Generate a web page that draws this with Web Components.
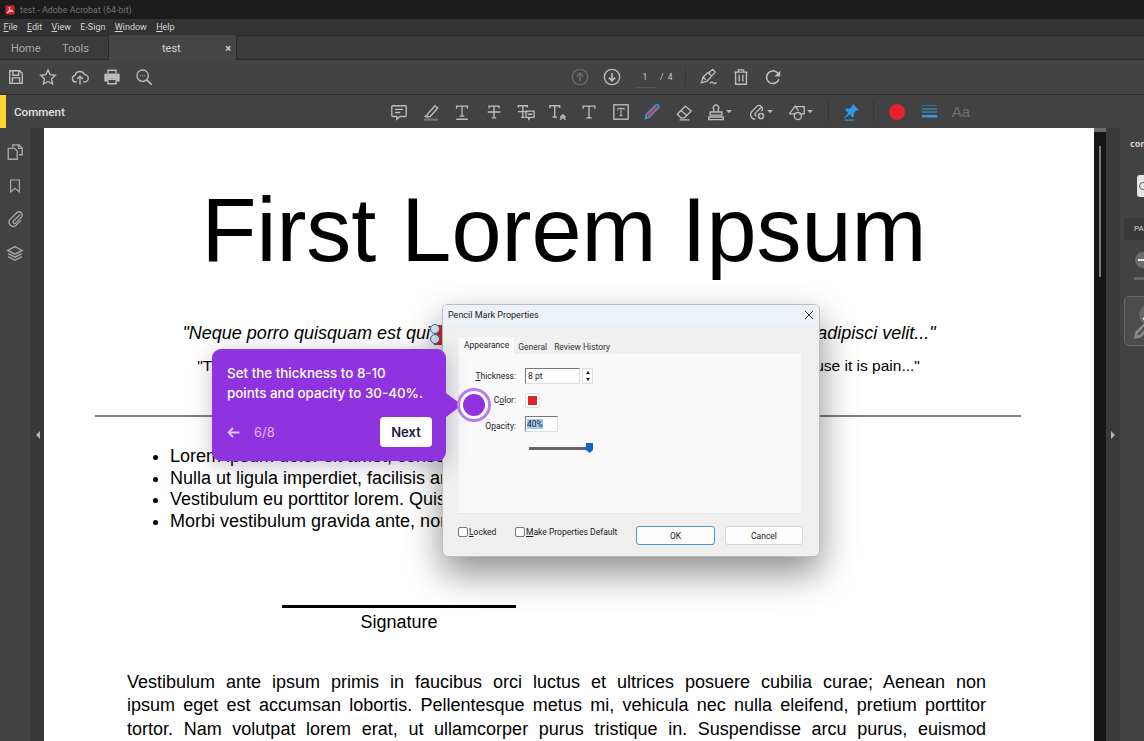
<!DOCTYPE html>
<html>
<head>
<meta charset="utf-8">
<title>test - Adobe Acrobat (64-bit)</title>
<style>
    html, body { margin: 0; height: 100%; background: #3a3a3a; overflow: hidden; }
    body { font-family: Roboto, "Noto Sans", sans-serif; }
    acro-app { display: block; }
</style>
</head>
<body>
<acro-app></acro-app>

<script>
const ICONS = {
    save: `<path d="M3 3h11l3 3v11H3z M6.500 3v5h6.500V3 M6 17v-6h8v6"/>`,
    star: `<path d="M10 2l2.400 5.400 5.800.7-4.300 3.900 1.200 5.800L10 14.900 4.900 17.800l1.200-5.800L1.800 8.100l5.800-.7z"/>`,
    upload: `<path d="M6.500 15.500H5a3.700 3.700 0 0 1-.5-7.300A5.500 5.500 0 0 1 15 7.400a4 4 0 0 1 .2 8.100h-1.700 M10 18.500v-9 M6.800 12.300L10 9.200l3.200 3.100"/>`,
    print: `<path fill="currentColor" stroke="none" d="M1.500 7.500q0-1.500 1.500-1.500h14q1.500 0 1.500 1.500V15H15v-3H5v3H1.500z"/><path d="M5.500 5.500V2.500h9v3 M5.500 12.500h9v5h-9z"/>`,
    zoom: `<circle cx="8.500" cy="8.500" r="6.300"/><path stroke-width="1.800" d="M13 13l5.500 5.500"/><path stroke-width="1.600" d="M5.800 8.500h.7 M8.200 8.500h.7 M10.600 8.500h.7"/>`,
    up: `<circle cx="10" cy="10" r="8.500"/><path stroke-width="1.800" d="M10 14.500V6 M6.500 9.300L10 5.800l3.500 3.500"/>`,
    down: `<circle cx="10" cy="10" r="8.500"/><path stroke-width="1.800" d="M10 5.500V14 M6.500 10.700l3.500 3.500 3.500-3.500"/>`,
    sign: `<path d="M1.500 16.500l2-6.500 5.500-5 4 4-5 5.500z M9.500 5.500L14 1.500l3 3-4 4.500 M3.500 10l3 3"/><path d="M11 17c1.500-1.500 2.500-1.500 3.500-.5s2 .8 4-.3"/>`,
    trash: `<path d="M2.500 4.500h15 M7 4.500V2h6v2.500 M4 4.500V18h12V4.500 M8 7.500V15 M12 7.500V15"/>`,
    rotate: `<path stroke-width="1.800" d="M16.500 12.500A7 7 0 1 1 14.500 5l2.500 2.500"/><path fill="currentColor" stroke="none" d="M18 3v6.500h-6.500z"/>`,
    comment: `<path d="M3 3h14q1 0 1 1v10q0 1-1 1h-6l-3.500 3v-3H3q-1 0-1-1V4q0-1 1-1z M5.500 7h9 M5.500 10.500h6"/>`,
    highlight: `<path d="M6 12.500L14.500 3l3 2.500L9 15l-3.500.5z"/><path stroke-width="2.400" stroke="#777" d="M2 18.500h16"/><path d="M3 15.500l2-2"/>`,
    tunder: `<path d="M4 6.500V3.500h12v3 M10 3.500v11 M7.500 14.500h5 M3.500 18h13"/>`,
    tstrike: `<path d="M4.500 6V3.500h11V6 M10 3.500v13 M7.500 16.500h5 M3 10h14"/>`,
    treplace: `<path d="M1.500 5V3h10v2 M6.500 3v13 M4.500 16h4 M1 9.500h11 M10 9h9v7h-4l-2 2v-2h-3z M12 12.500h5"/>`,
    tcaret: `<path d="M2 5.500V3h11v2.500 M7.500 3v12.500 M5 15.500h5 M13.500 16l3-3 3 3 M13.500 18.500l3-3 3 3"/>`,
    text: `<path d="M3.500 6.500V3.500h13v3 M10 3.500v13 M7 16.500h6"/>`,
    tbox: `<rect x="2" y="2" width="16" height="16" stroke-width="1.500"/><path stroke-width="1.100" d="M6.500 8V6h7v2 M10 6v8 M8.500 14h3"/>`,
    pencil: `<path stroke="#2f9be8" stroke-width="1.800" d="M2.800 17.300l1-4.600L14.500 2.200q1.300-.9 2.500.3t.3 2.500L6.800 15.800z"/><path stroke="#e8344a" stroke-width="2.800" d="M5.500 14.300L15.500 4.500"/>`,
    eraser: `<path d="M2.500 12.500L11.500 3.500l6.500 5.500-7.500 7.500H6.500z M6.800 8.500l6.500 5.500 M5 18.800h11"/>`,
    stamp: `<path d="M7.500 10V7a3 3 0 1 1 5 0v3 M3.500 10h13v3.500h-13z M2 15.500h16v3H2z"/>`,
    attach: `<path d="M14.500 5L8 11.500a1.800 1.800 0 0 0 2.500 2.500l5-5.500A3.800 3.800 0 0 0 10 3.500L4 10a5 5 0 0 0 4 8"/><circle fill="currentColor" stroke="#424242" cx="14.500" cy="14.500" r="4.500"/><path stroke="#424242" stroke-width="1.500" d="M12 14.500h5 M14.500 12v5"/>`,
    shapes: `<path d="M1.500 12L8 3.500l3.500 5 M8 4h10v8h-5.500 M1.500 12h6.500"/><circle cx="11" cy="14.500" r="4"/>`,
    pin: `<path fill="currentColor" stroke="none" d="M12.500 1.500l6 6-1.500 1-1-.5-3 3 .5 3.500-1.500 1.500-3.200-3.400L3.500 17l-.9-.6 4.300-5.400L3.500 7.500 5 6l3.500.5 3-3-.5-1z"/><path stroke-width="1.200" d="M3 19h11"/>`,
    lines: `<path stroke-dasharray="1.500 1" stroke-width="1" d="M1 3h18"/><path stroke-width="1.200" d="M1 7h18 M1 10.500h18"/><path stroke-width="3" d="M1 15.500h18"/>`,
    pages: `<path d="M7.500 5V2h7l3.500 3.500V13h-3.500 M14 2v4h4 M2.500 6h7l3 3v9h-10z"/>`,
    bookmark: `<path d="M4.500 2.500h11v15L10 13l-5.500 4.500z"/>`,
    clip: `<path d="M15.500 4L7.500 12a1.800 1.800 0 0 0 2.500 2.500l7-7.300a3.800 3.800 0 0 0-5.500-5.200L3.500 10a5 5 0 0 0 7 7l6-6"/>`,
    layers: `<path d="M10 1.800l8 4.200-8 4.200L2 6z M2.500 9.500L10 13.500l7.500-4 M2.500 13l7.500 4 7.500-4"/>`,
    acrobat: `<rect fill="#d9262e" stroke="none" x="1" y="1" width="18" height="18" rx="2"/><path stroke="#fff" stroke-width="1.500" fill="none" d="M4 15.500c3-1 6-6 5.500-10.500-.4-1.500-1.500-.5-1 1.500.8 3.500 3.500 6 7 6.500 1.500 0 1-1.500-1-1.300-3.500.3-7.500 1.800-10.500 3.800z"/>`,
    pen: `<circle fill="#666" stroke="none" cx="10" cy="6.500" r="6"/><path stroke="#f2f2f2" stroke-width="2" d="M6.500 9.500L12.500 3.500"/><path stroke="#8a8a8a" d="M11.500 11L4.500 18.500l-2.500.5.5-2.500L9.500 9.500z"/>`
};

class UiIcon extends HTMLElement {
    connectedCallback() {
        let size = this.getAttribute("size") || 20;
        this.attachShadow({ mode: "open" }).innerHTML = `
            <style>
                :host { display: inline-flex; width: ${size}px; height: ${size}px; color: inherit; }
                svg { width: 100%; height: 100%; fill: none; stroke: currentColor; stroke-width: 1.500; }
            </style>
            <svg viewBox="0 0 20 20">${ICONS[this.getAttribute("name")] || ""}</svg>
        `;
    }
}

class ToolBtn extends HTMLElement {
    connectedCallback() {
        let w = this.getAttribute("w") || 32;
        let pl = this.getAttribute("pl");
        let color = this.getAttribute("color") || "#bdbdbd";
        this.attachShadow({ mode: "open" }).innerHTML = `
            <style>
                :host { display: flex; flex: none; align-items: center; width: ${w}px;
                        justify-content: ${pl ? "flex-start" : "center"}; padding-left: ${pl || 0}px;
                        box-sizing: border-box; color: ${color}; }
                i { width: 0; height: 0; margin-left: 1px; border: 3px solid transparent; border-top-color: #bdbdbd; border-bottom: 0; }
            </style>
            <ui-icon name="${this.getAttribute("name")}" size="${this.getAttribute("size") || 18}"></ui-icon>
            ${this.hasAttribute("caret") ? "<i></i>" : ""}
        `;
    }
}

class TitleBar extends HTMLElement {
    connectedCallback() {
        this.attachShadow({ mode: "open" }).innerHTML = `
            <style>
                :host { display: flex; align-items: center; gap: 5px; height: 19px; padding-left: 5px;
                        background: #1c1c1c; color: #747474; font-size: 8.900px; }
            </style>
            <ui-icon name="acrobat" size="10"></ui-icon>
            <span><slot></slot></span>
        `;
    }
}

class MenuBar extends HTMLElement {
    connectedCallback() {
        let items = ["File", "Edit", "View", "E-Sign", "Window", "Help"];
        this.attachShadow({ mode: "open" }).innerHTML = `
            <style>
                :host { display: flex; align-items: center; gap: 9.300px; height: 16px; padding-left: 3.500px;
                        background: #333; color: #d4d4d4; font-size: 9px; }
                u { text-underline-offset: 1px; }
            </style>
            ${items.map(m => m === "E-Sign" ? `<span>${m}</span>` : `<span><u>${m[0]}</u>${m.slice(1)}</span>`).join("")}
        `;
    }
}

class TabBar extends HTMLElement {
    connectedCallback() {
        this.attachShadow({ mode: "open" }).innerHTML = `
            <style>
                :host { display: flex; height: 25px; background: #3b3b3b; color: #a8a8a8; font-size: 11px;
                        box-sizing: border-box; border-bottom: 1px solid #2a2a2a; border-top: 1px solid #2a2a2a; }
                .home { width: 51px; padding-left: 11px; line-height: 25px; }
                .tools { width: 46px; line-height: 25px; }
                .active { display: flex; align-items: center; justify-content: space-between; box-sizing: border-box;
                          width: 129px; height: 25px; margin-top: -1px; padding: 1px 5px 0 53px; background: #454545; color: #d6d6d6;
                          border-right: 1px solid #2a2a2a; border-left: 1px solid #2a2a2a; }
                b { color: #cfcfcf; font-size: 11px; font-weight: 700; }
            </style>
            <div class="home">Home</div>
            <div class="tools">Tools</div>
            <div class="active"><span>test</span><b>×</b></div>
        `;
    }
}

class MainToolbar extends HTMLElement {
    connectedCallback() {
        this.attachShadow({ mode: "open" }).innerHTML = `
            <style>
                :host { display: flex; height: 34px; background: #434343; border-bottom: 1px solid #2f2f2f; }
                .center { display: flex; margin-left: 404px; }
                .page { display: flex; align-items: center; flex: none; width: 65px; padding-left: 7px; box-sizing: border-box;
                        color: #c8c8c8; font-size: 8.500px; position: relative; }
                .num { width: 20px; text-align: center; border-bottom: 1px solid #555; line-height: 20px; margin-right: 5px; }
                .sep { width: 1px; height: 18px; background: #383838; position: absolute; right: 7px; top: 8px; }
            </style>
            <tool-btn name="save"></tool-btn>
            <tool-btn name="star"></tool-btn>
            <tool-btn name="upload"></tool-btn>
            <tool-btn name="print"></tool-btn>
            <tool-btn name="zoom"></tool-btn>
            <div class="center">
                <tool-btn name="up" color="#6b6b6b"></tool-btn>
                <tool-btn name="down"></tool-btn>
                <div class="page"><span class="num">1</span><span>/&nbsp;&nbsp;4</span><i class="sep"></i></div>
                <tool-btn name="sign"></tool-btn>
                <tool-btn name="trash"></tool-btn>
                <tool-btn name="rotate"></tool-btn>
            </div>
        `;
    }
}

class CommentBar extends HTMLElement {
    connectedCallback() {
        this.attachShadow({ mode: "open" }).innerHTML = `
            <style>
                :host { display: flex; height: 33px; background: #424242; border-left: 6px solid #fdd835; }
                .label { width: 377px; flex: none; padding-left: 8px; box-sizing: border-box; color: #e2e2e2; font-size: 11.600px; font-weight: 500; line-height: 35px; }
                .sep { flex: none; width: 1px; height: 20px; margin-top: 6px; background: #363636; }
                .aa { flex: none; width: 30px; text-align: center; color: #6e6e6e; font: 15px/33px "Liberation Sans", sans-serif; }
                .dot { flex: none; width: 32px; display: flex; align-items: center; justify-content: center; }
                .dot i { width: 16px; height: 16px; border-radius: 50%; background: #e4222c; }
            </style>
            <div class="label">Comment</div>
            <tool-btn w="31.700" name="comment"></tool-btn>
            <tool-btn w="31.700" name="highlight"></tool-btn>
            <tool-btn w="31.700" name="tunder"></tool-btn>
            <tool-btn w="31.700" name="tstrike"></tool-btn>
            <tool-btn w="31.700" name="treplace"></tool-btn>
            <tool-btn w="31.700" name="tcaret"></tool-btn>
            <tool-btn w="31.700" name="text"></tool-btn>
            <tool-btn w="31.700" name="tbox"></tool-btn>
            <tool-btn w="31.700" name="pencil"></tool-btn>
            <tool-btn w="31.700" name="eraser"></tool-btn>
            <tool-btn w="37" pl="7" name="stamp" caret></tool-btn>
            <tool-btn w="40" pl="11" name="attach" caret></tool-btn>
            <tool-btn w="51" pl="11" name="shapes" caret></tool-btn>
            <div class="sep"></div>
            <tool-btn w="44" name="pin" color="#2f9be8"></tool-btn>
            <div class="sep"></div>
            <div class="dot" style="margin-left:7px"><i></i></div>
            <tool-btn name="lines" color="#2f9be8" size="17" style="margin-left:1px"></tool-btn>
            <div class="aa">Aa</div>
        `;
    }
}

class SideRail extends HTMLElement {
    connectedCallback() {
        this.attachShadow({ mode: "open" }).innerHTML = `
            <style>
                :host { display: flex; flex: none; width: 44px; background: #393939; }
                .rail { display: flex; flex-direction: column; align-items: center; gap: 17px; box-sizing: border-box;
                        width: 30px; padding-top: 15px; background: #424242; color: #a9a9a9; }
                .gutter { flex: 1; display: flex; align-items: center; justify-content: center; }
                .gutter i { width: 0; height: 0; margin: 0 0 0 2px; border: 4px solid transparent; border-right-color: #b5b5b5; border-left: 0; }
            </style>
            <div class="rail">
                <ui-icon name="pages" size="18"></ui-icon>
                <ui-icon name="bookmark" size="16"></ui-icon>
                <ui-icon name="clip" size="17"></ui-icon>
                <ui-icon name="layers" size="18"></ui-icon>
            </div>
            <div class="gutter"><i></i></div>
        `;
    }
}

class PdfPage extends HTMLElement {
    connectedCallback() {
        this.attachShadow({ mode: "open" }).innerHTML = `
            <style>
                :host { display: block; flex: none; width: 1050px; overflow: hidden; background: #fff; color: #000;
                        font-family: "Liberation Sans", Arial, sans-serif; font-size: 18px; box-sizing: border-box; padding-top: 50px; }
                h1 { margin: 0 0 0 -10px; font-size: 90px; font-weight: 400; line-height: 104px; text-align: center; }
                .q1 { margin: 41px 0 0 -20px; font-style: italic; text-align: center; line-height: 21px; font-size: 18px; white-space: nowrap; }
                .q2 { margin: 11px 0 0 -21px; text-align: center; line-height: 21px; font-size: 15.500px; white-space: nowrap; }
                hr { margin: 39px 0 0 51px; width: 926px; height: 2px; border: 0; background: #808080; }
                ul { margin: 29px 0 0 0; padding: 0 0 0 126px; line-height: 21.600px; white-space: nowrap; }
                .sig { width: 234px; margin: 72.400px 0 0 238px; border-top: 3px solid #000; text-align: center; padding-top: 4px; line-height: 21px; }
                p { margin: 38px 0 0 83px; width: 859px; text-align: justify; text-align-last: justify; line-height: 23.500px; white-space: nowrap; }
            </style>
            <h1>First Lorem Ipsum</h1>
            <div class="q1">"Neque porro quisquam est qui dolorem ipsum quia dolor sit amet, consectetur, adipisci velit..."</div>
            <div class="q2">"There is no one who loves pain itself, who seeks after it and wants to have it, simply because it is pain..."</div>
            <hr>
            <ul>
                <li>Lorem ipsum dolor sit amet, consectetur adipiscing elit.</li>
                <li>Nulla ut ligula imperdiet, facilisis arcu et, tempor nunc.</li>
                <li>Vestibulum eu porttitor lorem. Quisque at sapien vel.</li>
                <li>Morbi vestibulum gravida ante, non feugiat nisl varius.</li>
            </ul>
            <div class="sig">Signature</div>
            <p>Vestibulum ante ipsum primis in faucibus orci luctus et ultrices posuere cubilia curae; Aenean non<br>ipsum eget est accumsan lobortis. Pellentesque metus mi, vehicula nec nulla eleifend, pretium porttitor<br>tortor. Nam volutpat lorem erat, ut ullamcorper purus tristique in. Suspendisse arcu purus, euismod</p>
        `;
    }
}

class RightPanel extends HTMLElement {
    connectedCallback() {
        this.attachShadow({ mode: "open" }).innerHTML = `
            <style>
                :host { display: flex; flex: 1; min-width: 0; overflow: hidden; background: #3a3a3a; }
                .bar { flex: none; width: 12px; background: #161616; display: flex; flex-direction: column; align-items: center; }
                .bar b { align-self: stretch; height: 4px; background: #6a6a6a; }
                .bar i { width: 2px; height: 131px; margin-top: 14px; background: #7c7c7c; }
                .gutter { flex: none; width: 14px; display: flex; align-items: center; justify-content: center; }
                .gutter i { width: 0; height: 0; border: 4px solid transparent; border-left-color: #b5b5b5; border-right: 0; }
                .panel { flex: none; width: 200px; box-sizing: border-box; background: #424242; color: #cfcfcf; padding: 9px 0 0 4px; }
                .t { font: 700 9px/14px "Noto Sans", sans-serif; padding-left: 6px; height: 14px; }
                .search { display: flex; align-items: center; width: 60px; height: 22px; margin: 24px 0 0 13px; background: #e6e6e6; border-radius: 3px 0 0 3px; padding-left: 2px; box-sizing: border-box; }
                .search i { width: 6px; height: 6px; border: 1.500px solid #666; border-radius: 50%; }
                .pa { height: 22px; margin: 21px 0 0 0; padding-left: 10px; background: #393939; font-size: 8px; line-height: 22px; }
                .zoom { display: flex; align-items: center; justify-content: center; width: 16px; height: 16px; border-radius: 50%; background: #6b6b6b; margin: 12px 0 0 11px; }
                .zoom i { width: 10px; height: 2px; background: #e6e6e6; }
                .track { width: 40px; height: 3px; margin: 9px 0 0 10px; background: #666; }
                .card { width: 60px; height: 50px; margin-top: 16px; border: 1px solid #6a6a6a; border-radius: 5px; background: #4c4c4c; box-sizing: border-box; padding: 6px 0 0 7px; }
            </style>
            <div class="bar"><b></b><i></i></div>
            <div class="gutter"><i></i></div>
            <div class="panel">
                <div class="t">comment</div>
                <div class="search"><i></i></div>
                <div class="pa">PAGE 1</div>
                <div class="zoom"><i></i></div>
                <div class="track"></div>
                <div class="card"><ui-icon name="pen" size="36"></ui-icon></div>
            </div>
        `;
    }
}

class PropsDialog extends HTMLElement {
    connectedCallback() {
        this.attachShadow({ mode: "open" }).innerHTML = `
            <style>
                :host { position: absolute; left: 442px; top: 304px; width: 378px; height: 253px; box-sizing: border-box; display: flex; flex-direction: column;
                        background: #efefef; border: 1px solid #bdbdbd; border-radius: 6px; color: #222; font-size: 8.500px;
                        box-shadow: 0 16px 36px rgba(0,0,0,.45); overflow: hidden; }
                .head { display: flex; flex: none; align-items: center; justify-content: space-between; box-sizing: border-box; height: 20px; padding: 0 5px 0 5px; background: #edf1f8; font-size: 9px; }
                .head svg { width: 10px; height: 10px; stroke: #333; stroke-width: 1; }
                .tabs { display: flex; flex: none; gap: 1px; margin: 13px 0 0 16px; height: 16px; white-space: nowrap; }
                .tabs span { padding: 4px 3px 0; background: #f0f0f0; color: #333; }
                .tabs .on { background: #fafafa; padding: 3px 5px 0; margin-top: -1px; height: 17px; color: #222; }
                .panel { flex: none; box-sizing: border-box; width: 342px; height: 160px; margin-left: 16px; padding-top: 14px; background: #f9f9f9; border-bottom: 1px solid #e6e6e6; display: grid;
                         grid-template-columns: 57px auto; grid-auto-rows: min-content; column-gap: 9px; justify-content: start; }
                label { text-align: right; align-self: center; }
                u { text-underline-offset: 1px; }
                input { display: block; box-sizing: border-box; height: 16px; border: 1px solid #ddd; border-top-color: #777; border-left-color: #777; background: #fff; font: inherit; padding: 0 2px; color: #222; outline: 0; }
                .r1 { display: flex; gap: 2px; }
                .spin { display: flex; flex-direction: column; width: 11px; height: 16px; border: 1px solid #ddd; box-sizing: border-box; background: #fff; }
                .spin i { flex: 1; display: flex; align-items: center; justify-content: center; }
                .spin i::before { content: ""; border: 2px solid transparent; border-bottom: 3px solid #222; border-top: 0; }
                .spin i + i::before { border-top: 3px solid #222; border-bottom: 0; }
                .swatch { width: 15px; height: 15px; margin: 9px 0 8px 0; padding: 2px; border: 1px solid #ddd; border-radius: 2px; box-sizing: border-box; background: #fff; }
                .swatch i { display: block; height: 100%; background: #dc2626; }
                .op { width: 33px; height: 16px; box-sizing: border-box; border: 1px solid #ddd; border-top-color: #777; border-left-color: #777; background: #fff; padding: 0 1px; line-height: 14px; }
                .sel { background: #9fcdf3; }
                .slider { grid-column: 2; display: flex; align-items: center; width: 64px; height: 10px; margin: 11px 0 0 4px; }
                .slider::before { content: ""; flex: 1; height: 3px; background: #666; }
                .slider i { width: 7px; height: 10px; background: #0c67c9; clip-path: polygon(0 0, 100% 0, 100% 70%, 50% 100%, 0 70%); }
                .foot { display: flex; flex: 1; align-items: flex-start; padding: 12px 0 0 15px; white-space: nowrap; }
                .chk { display: flex; flex: none; align-items: center; gap: 1px; height: 10px; margin-top: 1px; }
                .chk i { flex: none; box-sizing: border-box; width: 10px; height: 10px; border: 1px solid #777; border-radius: 2px; background: #fbfbfb; }
                button { box-sizing: border-box; width: 79px; height: 19px; padding: 0; background: #fdfdfd; border: 1px solid #d4d4d4; border-radius: 3px; font: inherit; color: #222; }
                .ok { margin-left: 18px; border-color: #4e94d4; }
                .cancel { margin-left: 10px; width: 78px; }
            </style>
            <div class="head"><span><slot></slot></span><svg viewBox="0 0 10 10"><path d="M1 1l8 8M9 1l-8 8"/></svg></div>
            <div class="tabs"><span class="on">Appearance</span><span>General</span><span>Review History</span></div>
            <div class="panel">
                <label><u>T</u>hickness:</label>
                <div class="r1"><input value="8 pt" style="width:55px"><div class="spin"><i></i><i></i></div></div>
                <label>C<u>o</u>lor:</label>
                <div class="swatch"><i></i></div>
                <label style="padding-top:4px">O<u>p</u>acity:</label>
                <div class="op"><span class="sel">40%</span></div>
                <div class="slider"><i></i></div>
            </div>
            <div class="foot">
                <div class="chk" style="width:57px"><i></i><span><u>L</u>ocked</span></div>
                <div class="chk" style="width:103px"><i></i><span><u>M</u>ake Properties Default</span></div>
                <button class="ok">OK</button>
                <button class="cancel">Cancel</button>
            </div>
        `;
    }
}

class PencilMark extends HTMLElement {
    connectedCallback() {
        this.attachShadow({ mode: "open" }).innerHTML = `
            <style>
                :host { position: absolute; left: 434px; top: 325px; width: 8px; height: 20px; background: #d8282f; }
                i { position: absolute; left: -4px; width: 10px; height: 10px; box-sizing: border-box; border: 1.500px solid #2a72b8; border-radius: 50%; background: #eef3f9; }
            </style>
            <i style="top:-1px"></i><i style="top:9px"></i>
        `;
    }
}

class GuideTip extends HTMLElement {
    connectedCallback() {
        this.attachShadow({ mode: "open" }).innerHTML = `
            <style>
                :host { position: absolute; left: 212px; top: 349px; width: 234px; height: 112px; box-sizing: border-box; display: flex; flex-direction: column; padding: 14px 14px 14px 15px;
                        background: #8f33e0; border-radius: 9px; color: #fff; font: 500 13.400px/20px Inter, "Noto Sans", sans-serif;
                        box-shadow: 0 4px 22px rgba(40,20,70,.28); }
                .text { height: 40px; white-space: nowrap; }
                .row { display: flex; align-items: center; margin-top: 14px; height: 30px; color: #d9bcf5; }
                .row svg { width: 13px; height: 11px; fill: none; stroke: #dcc4f4; stroke-width: 1.800; margin-right: 14px; }
                .count { font-weight: 400; font-size: 13px; flex: 1; }
                .next { display: flex; align-items: center; justify-content: center; width: 52px; height: 30px; background: #fff; border-radius: 4px; color: #1e1740; font-size: 13px; font-weight: 600; }
                .tail { position: absolute; left: 100%; top: 44px; width: 0; height: 0; border: 12px solid transparent; border-left: 16px solid #8f33e0; border-right: 0; }
                .beacon { position: absolute; left: 245px; top: 39px; width: 34px; height: 34px; box-sizing: border-box; padding: 3px; border: 3px solid #b77ee9; border-radius: 50%; background: #fff; }
                .beacon i { display: block; width: 22px; height: 22px; border-radius: 50%; background: #8f33e0; }
            </style>
            <div class="text"><slot></slot></div>
            <div class="row">
                <svg viewBox="0 0 13 11"><path d="M12.500 5.500H1.500 M6 1L1.500 5.500 6 10"/></svg>
                <span class="count">6/8</span>
                <span class="next">Next</span>
            </div>
            <div class="tail"></div>
            <div class="beacon"><i></i></div>
        `;
    }
}

class AcroApp extends HTMLElement {
    connectedCallback() {
        this.attachShadow({ mode: "open" }).innerHTML = `
            <style>
                :host { display: flex; flex-direction: column; position: relative; width: 1144px; height: 741px; overflow: hidden; }
                .main { display: flex; flex: 1; min-height: 0; }
            </style>
            <title-bar>test - Adobe Acrobat (64-bit)</title-bar>
            <menu-bar></menu-bar>
            <tab-bar></tab-bar>
            <main-toolbar></main-toolbar>
            <comment-bar></comment-bar>
            <div class="main">
                <side-rail></side-rail>
                <pdf-page></pdf-page>
                <right-panel></right-panel>
            </div>
            <pencil-mark></pencil-mark>
            <props-dialog>Pencil Mark Properties</props-dialog>
            <guide-tip>Set the thickness to 8-10<br>points and opacity to 30-40%.</guide-tip>
        `;
    }
}

customElements.define("ui-icon", UiIcon);
customElements.define("tool-btn", ToolBtn);
customElements.define("title-bar", TitleBar);
customElements.define("menu-bar", MenuBar);
customElements.define("tab-bar", TabBar);
customElements.define("main-toolbar", MainToolbar);
customElements.define("comment-bar", CommentBar);
customElements.define("side-rail", SideRail);
customElements.define("pdf-page", PdfPage);
customElements.define("right-panel", RightPanel);
customElements.define("props-dialog", PropsDialog);
customElements.define("pencil-mark", PencilMark);
customElements.define("guide-tip", GuideTip);
customElements.define("acro-app", AcroApp);
</script>
</body>
</html>
